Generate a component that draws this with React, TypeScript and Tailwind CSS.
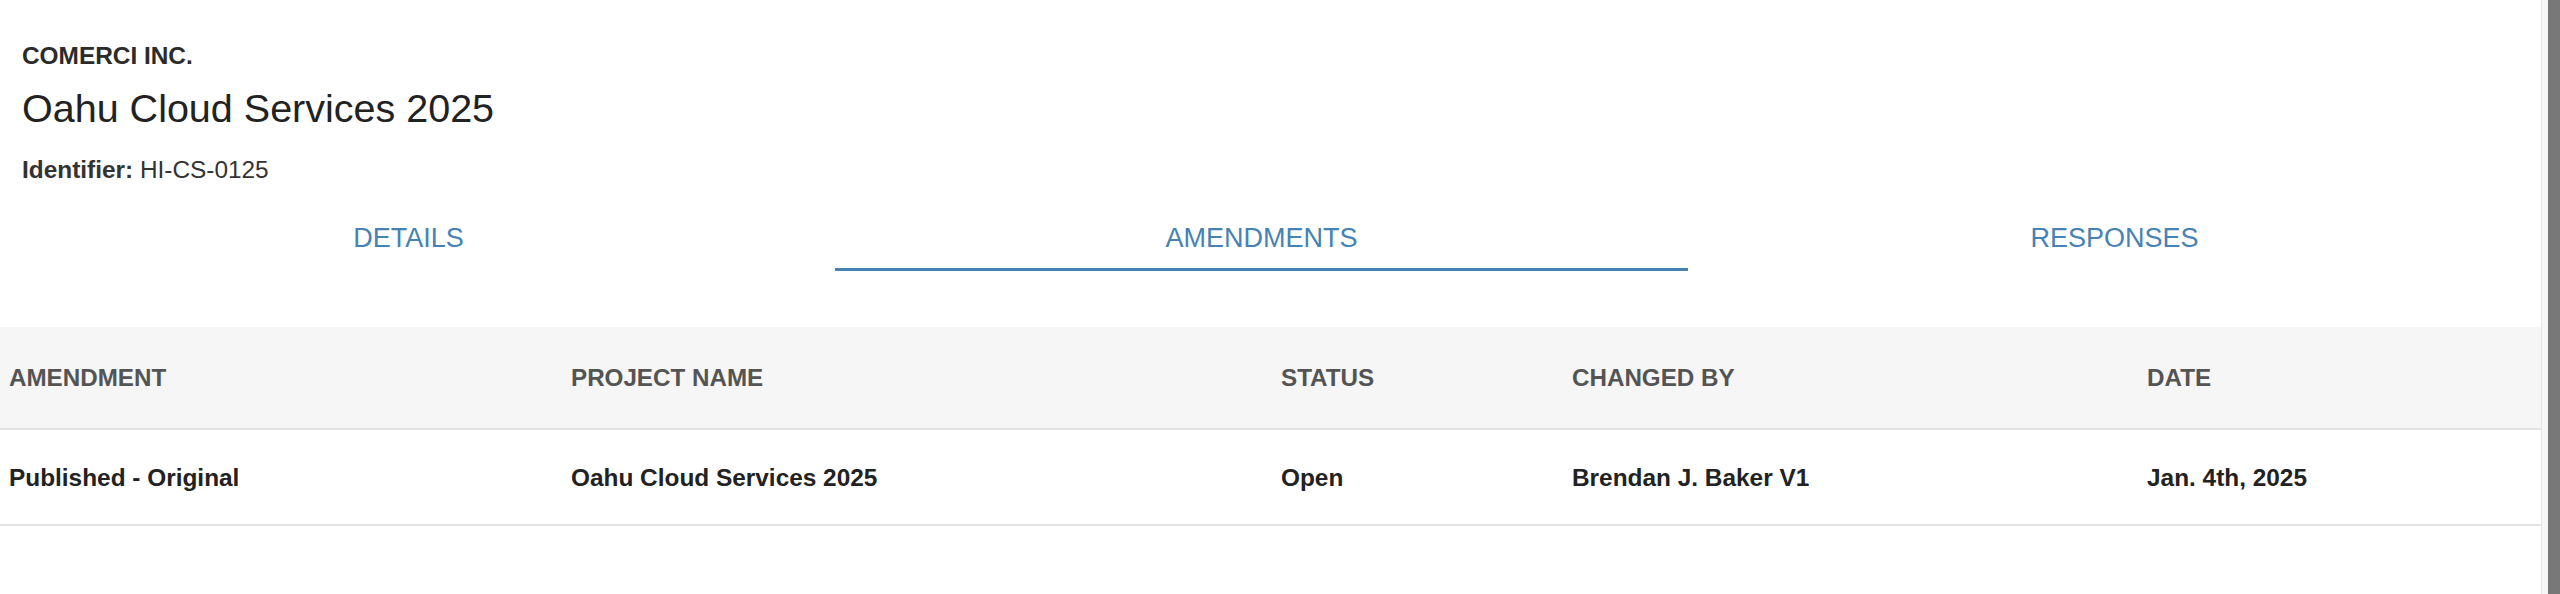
const tabs = ["DETAILS", "AMENDMENTS", "RESPONSES"];

const columns = ["AMENDMENT", "PROJECT NAME", "STATUS", "CHANGED BY", "DATE"];

const rows = [
  ["Published - Original", "Oahu Cloud Services 2025", "Open", "Brendan J. Baker V1", "Jan. 4th, 2025"],
];

export default function App() {
  const active = "AMENDMENTS";

  return (
    <div className="flex min-h-screen h-[594px] bg-white font-['Liberation_Sans',Arial,Helvetica,sans-serif] overflow-hidden">
      <div className="flex-1 min-w-0">
        <div className="pl-[22px] pt-[42px]">
          <div className="text-[24.4px] leading-[28px] font-bold text-[#2b2b2b]">COMERCI INC.</div>
          <h1 className="mt-[14px] text-[39.5px] leading-[48px] text-[#222]">Oahu Cloud Services 2025</h1>
          <div className="mt-[24px] text-[24.4px] leading-[28px] text-[#333]">
            <span className="font-bold">Identifier:</span> HI-CS-0125
          </div>
        </div>

        <div className="-ml-[18px] w-[2559px] grid grid-cols-3">
          {tabs.map((t) => (
            <button
              key={t}
              className={`pt-[38px] pb-[14px] text-[27px] leading-[32px] text-[#4682b4] border-b-[3px] ${
                t === active ? "border-[#4682b4]" : "border-transparent"
              }`}
            >
              {t}
            </button>
          ))}
        </div>

        <div className="mt-[56px]">
          <div className="grid grid-cols-[562px_710px_291px_575px_1fr] items-center h-[103px] bg-[#f6f6f6] border-b-2 border-[#e3e3e3]">
            {columns.map((c) => (
              <div key={c} className="pl-[9px] pt-[2px] text-[24.2px] font-bold text-[#545454]">
                {c}
              </div>
            ))}
          </div>
          {rows.map((r, i) => (
            <div
              key={i}
              className="grid grid-cols-[562px_710px_291px_575px_1fr] items-center h-[96px] border-b-2 border-[#e3e3e3]"
            >
              {r.map((v, j) => (
                <div key={j} className="pl-[9px] pt-[2px] text-[24.4px] font-bold text-[#222]">
                  {v}
                </div>
              ))}
            </div>
          ))}
        </div>
      </div>

      <div className="w-[19px] shrink-0 flex border-l border-[#e6e6e6] bg-[#f7f7f7] pl-[6px]">
        <div className="w-[12px] bg-[#787878]" />
      </div>
    </div>
  );
}
